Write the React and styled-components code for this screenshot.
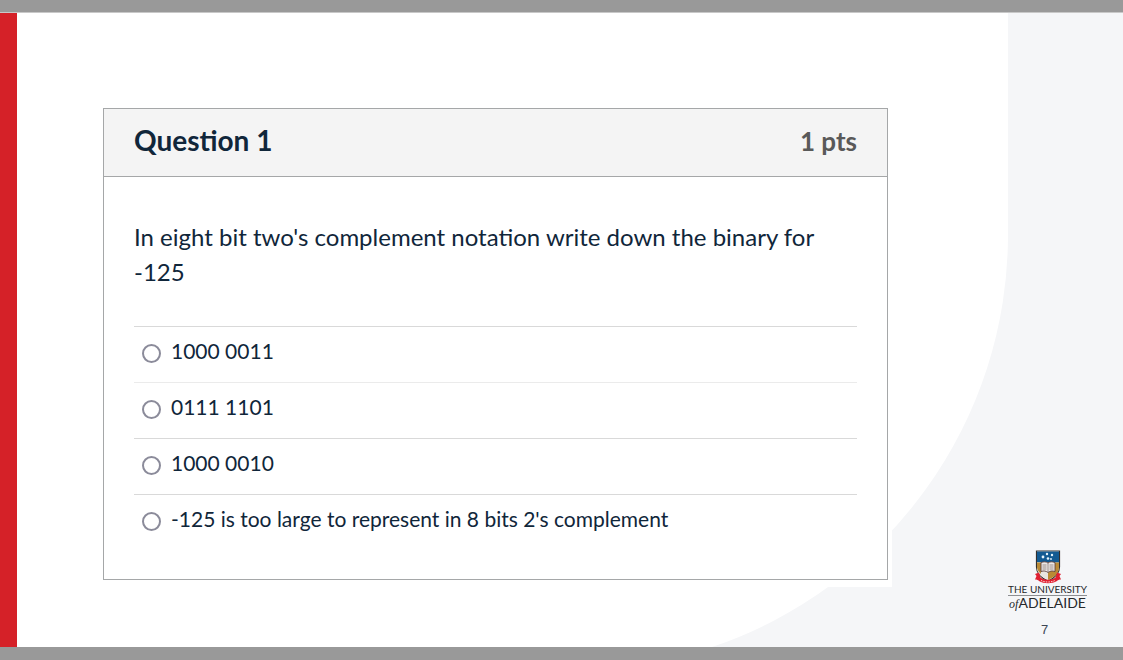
import React from "react";
import styled, { createGlobalStyle } from "styled-components";

const GlobalStyle = createGlobalStyle`
  *, *::before, *::after { box-sizing: border-box; }
  body {
    margin: 0;
    background: #999999;
    color: #10263a;
    font-family: Lato, "Liberation Sans", sans-serif;
  }
`;

const Viewer = styled.div`
  display: flex;
  min-height: 100vh;
  padding: 13px 0;
  background: #999999;
`;

const Slide = styled.main`
  position: relative;
  isolation: isolate;
  flex: 1;
  display: grid;
  grid-template-columns: 1fr 231px;
  border-left: 17px solid #d52128;
  background: #ffffff;
  box-shadow: 0 -1px 0 #c8c8c8;
`;

const Backdrop = styled.svg`
  position: absolute;
  inset: 0;
  z-index: -1;
  width: 100%;
  height: 100%;
`;

const Content = styled.div`
  padding: 91px 0 48px 82px;
`;

const Sheet = styled.div`
  padding: 4px 4px 7px;
  background: #ffffff;
`;

const Card = styled.form`
  border: 1px solid #a5a7a8;
`;

const CardHeader = styled.header`
  display: flex;
  align-items: center;
  justify-content: space-between;
  padding: 14px 30px 19px;
  border-bottom: 1px solid #a5a7a8;
  background: #f4f4f4;
`;

const Title = styled.h1`
  margin: 0;
  font-size: 28px;
  line-height: 34px;
  font-weight: 700;
`;

const Points = styled.span`
  padding-top: 2px;
  color: #595959;
  font-size: 26px;
  line-height: 32px;
  font-weight: 700;
`;

const CardBody = styled.div`
  padding: 42px 30px 29px;
`;

const Choices = styled.fieldset`
  margin: 0;
  padding: 0;
  border: 0;
  min-width: 0;
`;

const Prompt = styled.legend`
  padding: 0;
  margin-bottom: 37px;
  font-size: 24px;
  line-height: 35px;
`;

const Choice = styled.label`
  display: flex;
  align-items: center;
  gap: 10px;
  height: 56px;
  padding: 0 8px 7px;
  border-top: 1px solid ${(p) => (p.$faint ? "#ebebeb" : "#d9d9d9")};
  font-size: 21px;
  line-height: 28px;
`;

const Radio = styled.input`
  appearance: none;
  flex: none;
  width: 19px;
  height: 19px;
  margin: 5px 0 0;
  border: 2px solid #8b8b9a;
  border-radius: 50%;
  background: #ffffff;

  &:checked {
    background: #10263a;
    box-shadow: inset 0 0 0 3px #ffffff;
  }
`;

const Branding = styled.footer`
  display: flex;
  flex-direction: column;
  align-items: flex-end;
  justify-content: flex-end;
  padding: 0 36px 9px 0;
`;

const Logo = styled.div`
  display: flex;
  flex-direction: column;
  align-items: center;
  width: 79px;
  color: #26282b;
  white-space: nowrap;
`;

const LogoLine = styled.span`
  width: 100%;
  border-bottom: 1px solid #8d8f92;
  text-align: center;
  font-size: 10px;
  line-height: 11px;
`;

const LogoName = styled.span`
  font-size: 14px;
  line-height: 14px;
`;

const Of = styled.i`
  font-family: "Liberation Serif", serif;
  font-size: 12px;
`;

const PageNumber = styled.span`
  width: 79px;
  margin-top: 11px;
  padding-right: 6px;
  text-align: center;
  color: #3c4654;
  font-family: "Liberation Sans", sans-serif;
  font-size: 13px;
  line-height: 16px;
`;

function Crest() {
  return (
    <svg width="28" height="34" viewBox="0 0 28 34" role="img" aria-label="University crest">
      <path d="M2.500 1h23v16c0 7-5 11-11.500 14C7.500 28 2.500 24 2.500 17z" fill="#fff" stroke="#33302f" strokeWidth="1.200" />
      <path d="M3 1.500h22v11H3z" fill="#125a92" />
      <path d="M3 12.500h11v17.500C7 27 3 23 3 17z" fill="#e9e6df" />
      <path d="M14 12.500h11V17c0 6-4 10-11 13z" fill="#b98a35" />
      <path d="M3 12.500h4v11.500C4 21 3 19 3 17z" fill="#b98a35" />
      <g fill="#e6f4fb">
        <circle cx="13" cy="4" r="1.200" />
        <circle cx="18" cy="5" r="1.200" />
        <circle cx="9" cy="7" r="1.400" />
        <circle cx="14" cy="8.500" r="1.300" />
        <circle cx="17" cy="9" r="0.900" />
      </g>
      <path d="M7 12.500c3-1 5-1 7 .5 2-1.500 4-1.500 7-.5v9c-3-1-5-.5-7 1-2-1.500-4-2-7-1z" fill="#eee9e6" stroke="#5c3f3d" strokeWidth="0.900" />
      <path d="M14 13v9.500M8.500 15h4M8.500 17h4M8.500 19h4M15.500 15h4M15.500 17h4M15.500 19h4" stroke="#857775" strokeWidth="0.800" />
      <path d="M1 24l4-1.500 1.500 5c4 3 11 3 15 0L23 22.500l4 1.500-1.500 2 1.500 3.500c-2 0-3 .5-4 1.500-5 3-13 3-18 0-1-1-2-1.500-4-1.500l1.500-3.500z" fill="#e02031" />
      <path d="M7 30.500c4 2 10 2 14 0" fill="none" stroke="#ffd6d8" strokeWidth="1" strokeDasharray="1.500 1" />
    </svg>
  );
}

const answers = [
  { id: "a", text: "1000 0011" },
  { id: "b", text: "0111 1101", faint: true },
  { id: "c", text: "1000 0010" },
  { id: "d", text: "-125 is too large to represent in 8 bits 2's complement" },
];

export default function App() {
  return (
    <>
      <GlobalStyle />
      <Viewer>
        <Slide>
          <Backdrop viewBox="0 0 1106 634" preserveAspectRatio="xMaxYMax slice" aria-hidden="true">
            <path d="M991 0V222A435 435 0 0 1 695 634H1106V0z" fill="#f5f6f8" />
          </Backdrop>
          <Content>
            <Sheet>
              <Card>
                <CardHeader>
                  <Title>Question 1</Title>
                  <Points>1 pts</Points>
                </CardHeader>
                <CardBody>
                  <Choices>
                    <Prompt>
                      In eight bit two's complement notation write down the binary for -125
                    </Prompt>
                    {answers.map((a) => (
                      <Choice key={a.id} $faint={a.faint}>
                        <Radio type="radio" name="answer" value={a.id} />
                        {a.text}
                      </Choice>
                    ))}
                  </Choices>
                </CardBody>
              </Card>
            </Sheet>
          </Content>
          <Branding>
            <Logo>
              <Crest />
              <LogoLine>THE UNIVERSITY</LogoLine>
              <LogoName>
                <Of>of</Of>ADELAIDE
              </LogoName>
            </Logo>
            <PageNumber>7</PageNumber>
          </Branding>
        </Slide>
      </Viewer>
    </>
  );
}
